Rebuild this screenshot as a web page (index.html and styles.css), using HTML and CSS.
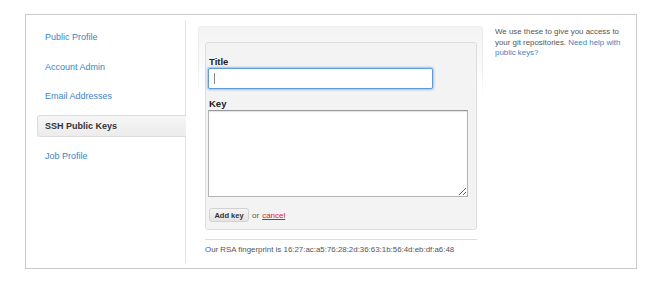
FILE: index.html
```html
<!DOCTYPE html>
<html>
<head>
<meta charset="utf-8">
<link rel="stylesheet" href="styles.css">
</head>
<body>
<div class="frame">
  <div class="sidebar">
    <a class="nav-item" href="#">Public Profile</a>
    <a class="nav-item" href="#">Account Admin</a>
    <a class="nav-item" href="#">Email Addresses</a>
    <a class="nav-item selected" href="#">SSH Public Keys</a>
    <a class="nav-item" href="#">Job Profile</a>
  </div>
  <div class="main">
    <div class="keys-box">
      <form class="key-form">
        <label class="field-label">Title</label>
        <span class="input-wrap">
          <input class="title-input" type="text" value="">
          <span class="caret"></span>
        </span>
        <label class="field-label key-label">Key</label>
        <textarea class="key-area"></textarea>
        <div class="actions">
          <button class="btn" type="button">Add key</button>
          <span class="or">or</span>
          <a class="cancel" href="#">cancel</a>
        </div>
      </form>
      <div class="fingerprint">Our RSA fingerprint is 16:27:ac:a5:76:28:2d:36:63:1b:56:4d:eb:df:a6:48</div>
    </div>
    <div class="help">We use these to give you access to your git repositories. <a href="#">Need help with public keys?</a></div>
  </div>
</div>
</body>
</html>
```
FILE: styles.css
```css
html, body {
  margin: 0;
  padding: 0;
  background: #fff;
}
body {
  font-family: "Liberation Sans", Arial, sans-serif;
  color: #333;
  padding: 14px 0 0 25px;
}
.frame {
  box-sizing: border-box;
  width: 612px;
  height: 255px;
  border: 1px solid #cacaca;
  display: flex;
  padding: 5px 0;
}
.sidebar {
  width: 148px;
  padding: 6px 0 0 11px;
  border-right: 1px solid #e4e4e4;
  display: flex;
  flex-direction: column;
  gap: 7.7px;
}
.nav-item {
  display: block;
  height: 22px;
  line-height: 20px;
  padding-left: 7px;
  font-size: 9px;
  color: #4183c4;
  text-decoration: none;
  margin-right: -1px;
  border: 1px solid transparent;
  box-sizing: border-box;
}
.nav-item.selected {
  background: linear-gradient(#f6f6f6, #ececec);
  border-color: #dcdcdc;
  border-right: none;
  border-radius: 3px 0 0 3px;
  color: #333;
  font-weight: bold;
}
.main {
  display: flex;
  padding: 6px 0 0 12px;
  gap: 12px;
}
.keys-box {
  box-sizing: border-box;
  width: 285px;
  padding: 15px 5px 0 6px;
  border: 1px solid #ececec;
  border-bottom: none;
  border-radius: 4px 4px 0 0;
  background: linear-gradient(#f3f3f3, #ffffff 60px);
  height: 237px;
  position: relative;
}
.keys-box::after {
  content: "";
  position: absolute;
  left: -1px;
  right: -1px;
  top: 40px;
  bottom: 0;
  background: linear-gradient(rgba(255,255,255,0), #fff 30px);
  pointer-events: none;
  z-index: 0;
}
.key-form {
  position: relative;
  z-index: 1;
  box-sizing: border-box;
  height: 188px;
  background: #f3f3f3;
  border: 1px solid #dedede;
  border-radius: 3px;
  padding: 13px 8px 0 2px;
  display: flex;
  flex-direction: column;
  align-items: flex-start;
}
.field-label {
  font-size: 9.5px;
  font-weight: bold;
  color: #222;
  line-height: 11px;
  padding-left: 1px;
  margin-bottom: 1px;
}
.key-label {
  margin-top: 9px;
}
.input-wrap {
  position: relative;
  display: block;
  width: 225px;
  height: 21px;
}
.title-input {
  box-sizing: border-box;
  display: block;
  width: 225px;
  height: 21px;
  margin: 0;
  border: 1px solid #5f9bd6;
  border-radius: 2px;
  box-shadow: 0 0 2px 1px rgba(95, 155, 214, 0.55);
  outline: none;
  background: #fff;
  padding: 2px 5px;
  font-size: 10px;
}
.caret {
  position: absolute;
  left: 6px;
  top: 5px;
  width: 1px;
  height: 11px;
  background: #888;
}
.key-area {
  box-sizing: border-box;
  width: 260px;
  height: 87px;
  margin: 0;
  border: 1px solid #b4b4b4;
  border-top-color: #999;
  box-shadow: inset 0 1px 1px rgba(0,0,0,0.12);
  background: #fff;
  resize: both;
  font-size: 10px;
}
.actions {
  margin-top: 11px;
  margin-left: 1px;
  display: flex;
  align-items: center;
  gap: 3px;
  font-size: 8px;
}
.btn {
  box-sizing: border-box;
  width: 40px;
  height: 14px;
  padding: 0;
  font-family: "Liberation Sans", Arial, sans-serif;
  font-size: 7.5px;
  font-weight: bold;
  color: #333;
  background: linear-gradient(#f6f6f6, #e4e4e4);
  border: 1px solid #d2d2d2;
  border-radius: 3px;
}
.or {
  color: #555;
}
.cancel {
  color: #e3171d;
  text-decoration: underline;
}
.fingerprint {
  position: relative;
  z-index: 1;
  margin-top: 9px;
  border-top: 1px solid #dedede;
  padding-top: 5px;
  font-size: 7.9px;
  line-height: 10px;
  color: #555;
}
.help {
  width: 132px;
  padding-top: 1px;
  font-size: 7.9px;
  line-height: 10.5px;
  color: #555;
}
.help a {
  color: #4183c4;
  text-decoration: none;
}
```
